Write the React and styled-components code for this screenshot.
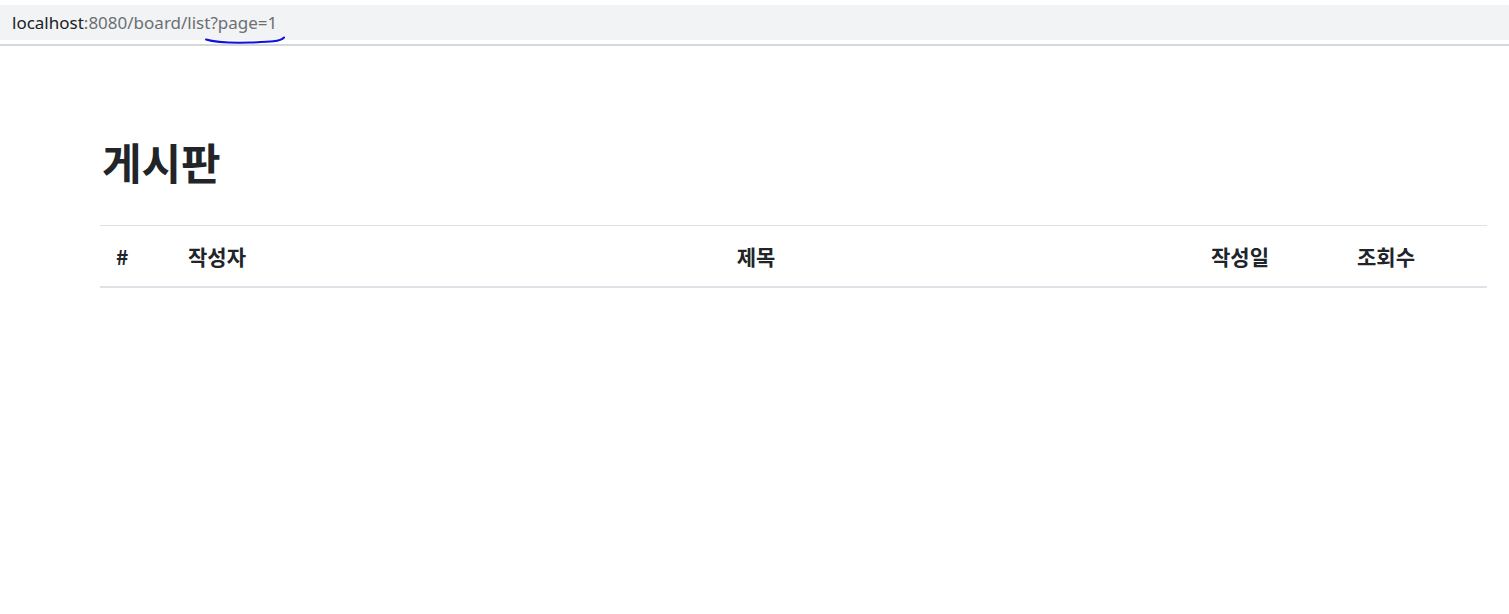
import styled, { createGlobalStyle } from "styled-components";

const GlobalStyle = createGlobalStyle`
    body {
        margin: 0;
        background: #fff;
        font-family: "Noto Sans CJK KR", "Noto Sans", sans-serif;
        color: #212529;
    }
`;

const Page = styled.div`
    width: 1509px;
    min-height: 614px;
    background: #fff;
`;

const AddressArea = styled.div`
    position: relative;
    padding-top: 5px;
    padding-bottom: 4px;
    border-bottom: 2px solid #d6d7d9;
`;

const AddressBar = styled.div`
    height: 35px;
    background: #f1f3f4;
    display: flex;
    align-items: center;
    padding-left: 12px;
    font-family: "Noto Sans", "Open Sans", sans-serif;
    font-size: 17px;
`;

const Host = styled.span`
    color: #202124;
`;

const Path = styled.span`
    color: #6b6f73;
`;

const Scribble = styled.svg`
    position: absolute;
    left: 200px;
    top: 30px;
`;

const Container = styled.main`
    padding: 85px 22px 0 100px;
`;

const Title = styled.h1`
    margin: 0 0 34px 2px;
    font-size: 43px;
    font-weight: 700;
    line-height: 60px;
    color: #212529;
`;

const Table = styled.div`
    border-top: 1px solid #dee2e6;
    border-bottom: 2px solid #dee2e6;
`;

const HeadRow = styled.div`
    display: grid;
    grid-template-columns: 88px 152px 832px 177px 138px;
    height: 60px;
    align-items: center;
`;

const Th = styled.div`
    font-size: 21px;
    font-weight: 700;
    line-height: 24px;
    color: #212529;
    padding-left: ${(p) => p.$pad || 0}px;
    text-align: ${(p) => (p.$center ? "center" : "left")};
`;

export default function App() {
    return (
        <Page>
            <GlobalStyle />
            <AddressArea>
                <AddressBar>
                    <Host>localhost</Host>
                    <Path>:8080/board/list?page=1</Path>
                </AddressBar>
                <Scribble width="100" height="20" viewBox="0 0 100 20">
                    <path
                        d="M6 9.5 C 14 12, 30 13, 50 12.5 C 68 12, 80 12, 84 7.5"
                        fill="none"
                        stroke="#1010e0"
                        strokeWidth="2"
                        strokeLinecap="round"
                    />
                </Scribble>
            </AddressArea>
            <Container>
                <Title>게시판</Title>
                <Table>
                    <HeadRow>
                        <Th $pad={16}>#</Th>
                        <Th>작성자</Th>
                        <Th $center>제목</Th>
                        <Th $pad={39}>작성일</Th>
                        <Th $pad={8}>조회수</Th>
                    </HeadRow>
                </Table>
            </Container>
        </Page>
    );
}
